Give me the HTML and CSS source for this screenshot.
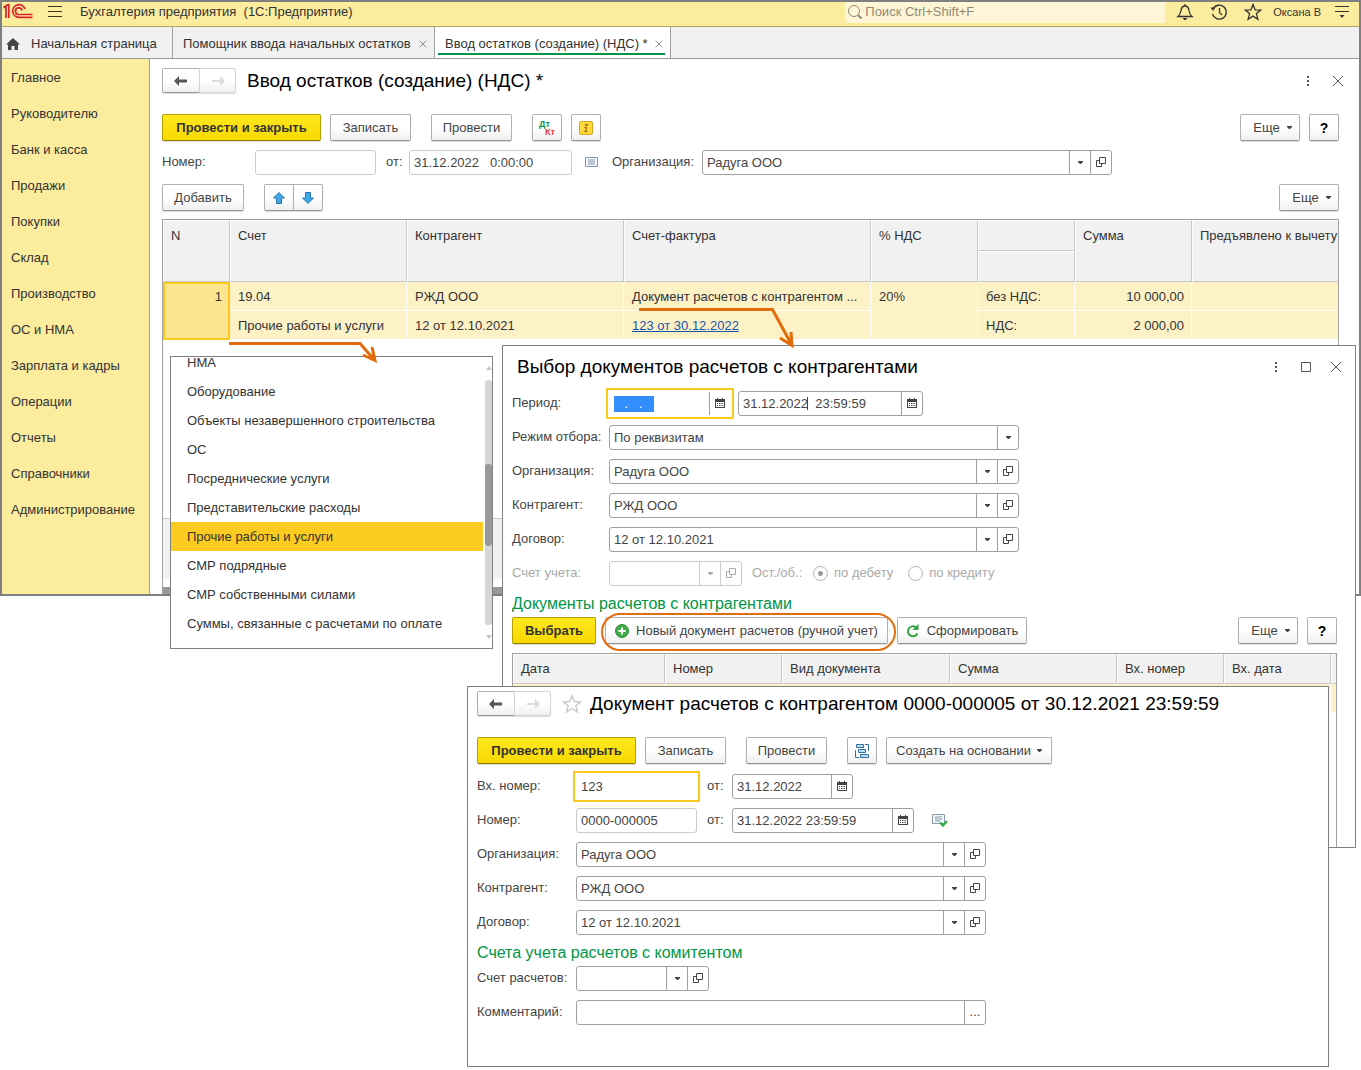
FILE: index.html
```html
<!DOCTYPE html>
<html lang="ru">
<head>
<meta charset="utf-8">
<title>Бухгалтерия предприятия</title>
<link rel="stylesheet" href="styles.css">
</head>
<body>
<svg class="sprite" aria-hidden="true">
  <symbol id="i-back" viewBox="0 0 16 12"><path d="M1 6l5-5v3.600h8v2.800H6V11z" fill="currentColor"/></symbol>
  <symbol id="i-forward" viewBox="0 0 16 12"><path d="M15 6l-5-5v4H2v2h8v4z" fill="currentColor"/></symbol>
  <symbol id="i-caret" viewBox="0 0 5 3"><path d="M0 0h5v1L3 3H2L0 1z" fill="currentColor"/></symbol>
  <symbol id="i-open" viewBox="0 0 10 10"><path d="M3.500.5h6v6h-6zM3 3.500H.5v6h5V7" fill="none" stroke="currentColor"/></symbol>
  <symbol id="i-cal" viewBox="0 0 10 10"><path d="M0 1h2V0h1v1h4V0h1v1h2v9H0zM1 4v5h8V4z" fill="currentColor" fill-rule="evenodd"/><path d="M2 5h1v1H2zM4 5h1v1H4zM5.500 5h1v1h-1zM7 5h1v1H7zM2 7h1v1H2zM4 7h1v1H4zM5.500 7h1v1h-1zM7 7h1v1H7z" fill="currentColor"/></symbol>
  <symbol id="i-close" viewBox="0 0 12 12"><path d="M1 1l10 10M11 1L1 11" stroke="currentColor" fill="none"/></symbol>
  <symbol id="i-dots" viewBox="0 0 12 12"><path d="M5 1h2v2H5zM5 5h2v2H5zM5 9h2v2H5z" fill="currentColor"/></symbol>
  <symbol id="i-star" viewBox="0 0 18 18"><path d="M9 1.500l2.100 5.300 5.700.3-4.400 3.500 1.500 5.600L9 13.100l-4.900 3.100 1.500-5.600L1.200 7.100l5.700-.3z" fill="none" stroke="currentColor" stroke-width="1.300"/></symbol>
  <symbol id="i-list" viewBox="0 0 14 12"><path d="M.5 1.500h12v9H.5z" fill="#f4f7fa" stroke="#8598ad"/><path d="M3 4h7M3 6h7M3 8h7" stroke="#8598ad"/></symbol>
</svg>

<div class="desktop">
  <main class="app">
    <header class="topbar">
      <svg class="logo" viewBox="0 2 32 20" role="img" aria-label="1С"><path d="M1.500 7.500H4V18M6.800 18V4.800H5.500L1.500 7.500M23 9A6.300 6.300 0 1 0 17 17.300H30.500M20 10.500a3.300 3.300 0 1 0-3 4H30.500" fill="none" stroke="#d9252b" stroke-width="1.700"/></svg>
      <button class="plain burger" aria-label="Меню"><svg viewBox="0 0 14 12"><path d="M0 .5h14M0 5.500h14M0 10.500h14" stroke="#3b3825"/></svg></button>
      <span class="app-name">Бухгалтерия предприятия&nbsp; (1С:Предприятие)</span>
      <label class="search">
        <svg viewBox="0 0 16 16"><circle cx="7" cy="7" r="5.500" fill="none" stroke="#8f8a78"/><path d="M11 11l3.500 3.500" stroke="#8f8a78" stroke-width="2"/></svg>
        <input type="search" placeholder="Поиск Ctrl+Shift+F" aria-label="Поиск">
      </label>
      <button class="plain" aria-label="Уведомления"><svg class="i18" viewBox="0 0 18 18"><path d="M2 13.500c2-1.500 2.500-3 3-6C5.500 4 7 3 9 3s3.500 1 4 4.500c.5 3 1 4.500 3 6zM9 3V1" fill="none" stroke="#333" stroke-width="1.300"/><path d="M6.500 15h5L9 17.500z" fill="#333"/></svg></button>
      <button class="plain" aria-label="История"><svg class="i18" viewBox="0 0 18 18"><path d="M3 6a7 7 0 1 1-.5 5M9.500 5v4.500l2.500 2.500" fill="none" stroke="#333" stroke-width="1.300"/><path d="M.5 4.500h5L3 8z" fill="#333"/></svg></button>
      <button class="plain" aria-label="Избранное"><svg class="i18 dark"><use href="#i-star"/></svg></button>
      <span class="user">Оксана В</span>
      <button class="plain" aria-label="Настройки"><svg class="tune" viewBox="0 0 14 14"><path d="M0 1.500h14M0 6.500h14" stroke="#333" stroke-width="1.200"/><path d="M4.500 10h5L7 13z" fill="#333"/></svg></button>
    </header>

    <nav class="tabs">
      <a href="#" class="tab home"><svg viewBox="0 0 14 12"><path d="M7 0l7 6.500h-2V12H8.500V8h-3v4H2V6.500H0z" fill="#444"/></svg>Начальная страница</a>
      <a href="#" class="tab">Помощник ввода начальных остатков<svg class="tab-x"><use href="#i-close"/></svg></a>
      <a href="#" class="tab active">Ввод остатков (создание) (НДС) *<svg class="tab-x"><use href="#i-close"/></svg></a>
    </nav>

    <div class="body">
      <nav class="side">
        <a href="#">Главное</a><a href="#">Руководителю</a><a href="#">Банк и касса</a><a href="#">Продажи</a><a href="#">Покупки</a><a href="#">Склад</a><a href="#">Производство</a><a href="#">ОС и НМА</a><a href="#">Зарплата и кадры</a><a href="#">Операции</a><a href="#">Отчеты</a><a href="#">Справочники</a><a href="#">Администрирование</a>
      </nav>

      <section class="page">
        <div class="heading">
          <div class="pair nav-pair"><button class="btn" aria-label="Назад"><svg class="arrow"><use href="#i-back"/></svg></button><button class="btn off" aria-label="Вперед"><svg class="arrow"><use href="#i-forward"/></svg></button></div>
          <h1>Ввод остатков (создание) (НДС) *</h1>
          <div class="win-ctl"><button class="plain" aria-label="Еще"><svg class="i12"><use href="#i-dots"/></svg></button><button class="plain" aria-label="Закрыть"><svg class="i12"><use href="#i-close"/></svg></button></div>
        </div>
        <div class="bar">
          <button class="btn main w-post">Провести и закрыть</button>
          <button class="btn w-save">Записать</button>
          <button class="btn w-save gap">Провести</button>
          <button class="btn sq gap dtkt"><span class="dt">Дт</span><span class="kt">Кт</span></button>
          <button class="btn sq" aria-label="Информация"><svg class="i14" viewBox="0 0 14 14"><rect x=".5" y=".5" width="13" height="13" rx="1.500" fill="#ffda3d" stroke="#d9a520"/><path d="M6 3h3v2H6zM5 6h3.500l-1 4H9v1H4.500l.3-1H6l.6-3H5z" fill="#a9801a"/></svg></button>
          <button class="btn w-more push">Еще<svg class="caret"><use href="#i-caret"/></svg></button>
          <button class="btn sq help">?</button>
        </div>
        <div class="row">
          <label class="lbl-num" for="num">Номер:</label>
          <div class="field ro w121"><input id="num" readonly></div>
          <label class="of" for="date">от:</label>
          <div class="field ro w163"><input id="date" value="31.12.2022   0:00:00" readonly></div>
          <svg class="list-ico"><use href="#i-list"/></svg>
          <label class="lbl-org" for="org">Организация:</label>
          <div class="field w410"><input id="org" value="Радуга ООО"><button aria-label="Выбрать"><svg class="caret"><use href="#i-caret"/></svg></button><button aria-label="Открыть"><svg class="i10"><use href="#i-open"/></svg></button></div>
        </div>
        <div class="bar bar-rows">
          <button class="btn w-add">Добавить</button>
          <div class="pair gap"><button class="btn" aria-label="Вверх"><svg class="i12" viewBox="0 0 12 12"><path d="M6 .5L11.500 6H8.500v5.500h-5V6H.5z" fill="#3fa9ea" stroke="#2a74ad"/></svg></button><button class="btn" aria-label="Вниз"><svg class="i12" viewBox="0 0 12 12"><path d="M6 11.500L.5 6h3V.5h5V6h3z" fill="#3fa9ea" stroke="#2a74ad"/></svg></button></div>
          <button class="btn w-more push">Еще<svg class="caret"><use href="#i-caret"/></svg></button>
        </div>
        <div class="grid-box">
          <table class="grid">
            <colgroup><col class="c67"><col class="c177"><col class="c217"><col class="c247"><col class="c107"><col class="c97"><col class="c117"><col></colgroup>
            <thead>
              <tr><th rowspan="2">N</th><th rowspan="2">Счет</th><th rowspan="2">Контрагент</th><th rowspan="2">Счет-фактура</th><th rowspan="2">% НДС</th><th></th><th rowspan="2">Сумма</th><th rowspan="2">Предъявлено к вычету</th></tr>
              <tr><th class="mid"></th></tr>
            </thead>
            <tbody>
              <tr><td rowspan="2" class="num current">1</td><td>19.04</td><td>РЖД ООО</td><td>Документ расчетов с контрагентом ...</td><td rowspan="2">20%</td><td>без НДС:</td><td class="num">10 000,00</td><td></td></tr>
              <tr><td>Прочие работы и услуги</td><td>12 от 12.10.2021</td><td><a href="#">123 от 30.12.2022</a></td><td>НДС:</td><td class="num">2 000,00</td><td></td></tr>
            </tbody>
          </table>
          <div class="grid-foot"></div>
          <div class="grid-scroll"></div>
        </div>
      </section>
    </div>
  </main>

  <div class="popup">
    <ul>
      <li>НМА</li><li>Оборудование</li><li>Объекты незавершенного строительства</li><li>ОС</li><li>Посреднические услуги</li><li>Представительские расходы</li><li class="sel">Прочие работы и услуги</li><li>СМР подрядные</li><li>СМР собственными силами</li><li>Суммы, связанные с расчетами по оплате</li><li>Т</li>
    </ul>
    <div class="scroll"><i class="up"></i><div class="track"><div class="thumb"></div></div><i class="down"></i></div>
  </div>

  <section class="win choose">
    <div class="heading">
      <h2>Выбор документов расчетов с контрагентами</h2>
      <div class="win-ctl"><button class="plain" aria-label="Еще"><svg class="i12"><use href="#i-dots"/></svg></button><button class="plain" aria-label="Развернуть"><svg class="i12" viewBox="0 0 12 12"><path d="M1.500 1.500h9v9h-9z" fill="none" stroke="currentColor"/></svg></button><button class="plain" aria-label="Закрыть"><svg class="i12"><use href="#i-close"/></svg></button></div>
    </div>
    <div class="form">
      <div class="row"><label for="p1">Период:</label>
        <div class="field focus w122"><input id="p1" class="picked" value="  .   .    "><button class="push" aria-label="Календарь"><svg class="i10"><use href="#i-cal"/></svg></button></div>
        <div class="field w185"><input value="31.12.2022  23:59:59" aria-label="Конец периода"><span class="beam"></span><button aria-label="Календарь"><svg class="i10"><use href="#i-cal"/></svg></button></div></div>
      <div class="row"><label for="mode">Режим отбора:</label>
        <div class="field w410"><select id="mode"><option>По реквизитам</option></select><span class="drop"><svg class="caret"><use href="#i-caret"/></svg></span></div></div>
      <div class="row"><label for="o2">Организация:</label>
        <div class="field w410"><input id="o2" value="Радуга ООО"><button aria-label="Выбрать"><svg class="caret"><use href="#i-caret"/></svg></button><button aria-label="Открыть"><svg class="i10"><use href="#i-open"/></svg></button></div></div>
      <div class="row"><label for="k2">Контрагент:</label>
        <div class="field w410"><input id="k2" value="РЖД ООО"><button aria-label="Выбрать"><svg class="caret"><use href="#i-caret"/></svg></button><button aria-label="Открыть"><svg class="i10"><use href="#i-open"/></svg></button></div></div>
      <div class="row"><label for="d2">Договор:</label>
        <div class="field w410"><input id="d2" value="12 от 12.10.2021"><button aria-label="Выбрать"><svg class="caret"><use href="#i-caret"/></svg></button><button aria-label="Открыть"><svg class="i10"><use href="#i-open"/></svg></button></div></div>
      <div class="row disabled"><label for="s2">Счет учета:</label>
        <div class="field w133"><input id="s2" disabled><button disabled aria-label="Выбрать"><svg class="caret"><use href="#i-caret"/></svg></button><button disabled aria-label="Открыть"><svg class="i10"><use href="#i-open"/></svg></button></div>
        <span class="bal">Ост./об.:</span>
        <label class="radio"><input type="radio" name="side" checked disabled>по дебету</label>
        <label class="radio"><input type="radio" name="side" disabled>по кредиту</label></div>
    </div>
    <h3>Документы расчетов с контрагентами</h3>
    <div class="bar">
      <button class="btn main w-pick">Выбрать</button>
      <div class="ringed"><button class="btn w-new"><svg class="i14" viewBox="0 0 14 14"><circle cx="7" cy="7" r="6.500" fill="#3fae49" stroke="#2b8a3a"/><path d="M7 3.500v7M3.500 7h7" stroke="#fff" stroke-width="2"/></svg>Новый документ расчетов (ручной учет)</button></div>
      <button class="btn w-build"><svg class="i14" viewBox="0 0 14 14"><path d="M11.500 9.500A5 5 0 1 1 10 3.300" fill="none" stroke="#2fa33f" stroke-width="2"/><path d="M12.500 0v6h-6z" fill="#2fa33f"/></svg>Сформировать</button>
      <button class="btn w-more push">Еще<svg class="caret"><use href="#i-caret"/></svg></button>
      <button class="btn sq help">?</button>
    </div>
    <div class="grid-box docs">
      <table class="grid">
        <colgroup><col class="c152"><col class="c117"><col class="c168"><col class="c167"><col class="c107"><col class="c107"><col></colgroup>
        <thead><tr><th>Дата</th><th>Номер</th><th>Вид документа</th><th>Сумма</th><th>Вх. номер</th><th>Вх. дата</th><th></th></tr></thead>
        <tbody><tr><td></td><td></td><td></td><td></td><td></td><td></td><td></td></tr></tbody>
      </table>
    </div>
  </section>

  <section class="win doc">
    <div class="heading">
      <div class="pair nav-pair"><button class="btn" aria-label="Назад"><svg class="arrow"><use href="#i-back"/></svg></button><button class="btn off" aria-label="Вперед"><svg class="arrow"><use href="#i-forward"/></svg></button></div>
      <button class="plain fav" aria-label="В избранное"><svg class="i20"><use href="#i-star"/></svg></button>
      <h2>Документ расчетов с контрагентом 0000-000005 от 30.12.2021 23:59:59</h2>
    </div>
    <div class="bar">
      <button class="btn main w-post">Провести и закрыть</button>
      <button class="btn w-save">Записать</button>
      <button class="btn w-save gap">Провести</button>
      <button class="btn sq gap" aria-label="Структура"><svg class="i14" viewBox="0 0 14 14"><path d="M1.500.5h7v3h-7zM3.500 5.500h7v3h-7zM5.500 10.500h8v3h-8z" fill="#b9dcf2" stroke="#336f9f"/><path d="M10 .5h3.500V7M.5 6v7.500H4" fill="none" stroke="#336f9f"/></svg></button>
      <button class="btn w-base">Создать на основании<svg class="caret"><use href="#i-caret"/></svg></button>
    </div>
    <div class="form">
      <div class="row"><label for="in3">Вх. номер:</label>
        <div class="field focus w121"><input id="in3" value="123"></div><label class="of" for="ind3">от:</label>
        <div class="field w121"><input id="ind3" value="31.12.2022"><button aria-label="Календарь"><svg class="i10"><use href="#i-cal"/></svg></button></div></div>
      <div class="row"><label for="n3">Номер:</label>
        <div class="field ro w121"><input id="n3" value="0000-000005" readonly></div><label class="of" for="nd3">от:</label>
        <div class="field w182"><input id="nd3" value="31.12.2022 23:59:59"><button aria-label="Календарь"><svg class="i10"><use href="#i-cal"/></svg></button></div>
        <svg class="posted" viewBox="0 0 16 14"><path d="M.5 1.500h12v9H.5z" fill="#f4f7fa" stroke="#8598ad"/><path d="M3 4h7M3 6h7M3 8h5" stroke="#8598ad"/><path d="M8 9.500l3 3L15 8" fill="none" stroke="#35b04a" stroke-width="2.400"/></svg></div>
      <div class="row"><label for="o3">Организация:</label>
        <div class="field w410"><input id="o3" value="Радуга ООО"><button aria-label="Выбрать"><svg class="caret"><use href="#i-caret"/></svg></button><button aria-label="Открыть"><svg class="i10"><use href="#i-open"/></svg></button></div></div>
      <div class="row"><label for="k3">Контрагент:</label>
        <div class="field w410"><input id="k3" value="РЖД ООО"><button aria-label="Выбрать"><svg class="caret"><use href="#i-caret"/></svg></button><button aria-label="Открыть"><svg class="i10"><use href="#i-open"/></svg></button></div></div>
      <div class="row"><label for="d3">Договор:</label>
        <div class="field w410"><input id="d3" value="12 от 12.10.2021"><button aria-label="Выбрать"><svg class="caret"><use href="#i-caret"/></svg></button><button aria-label="Открыть"><svg class="i10"><use href="#i-open"/></svg></button></div></div>
    </div>
    <h3>Счета учета расчетов с комитентом</h3>
    <div class="form">
      <div class="row"><label for="s3">Счет расчетов:</label>
        <div class="field w133"><input id="s3"><button aria-label="Выбрать"><svg class="caret"><use href="#i-caret"/></svg></button><button aria-label="Открыть"><svg class="i10"><use href="#i-open"/></svg></button></div></div>
      <div class="row"><label for="c3">Комментарий:</label>
        <div class="field w410"><input id="c3"><button aria-label="Изменить">...</button></div></div>
    </div>
  </section>

  <svg class="pointers" viewBox="0 0 600 80" aria-hidden="true"><g fill="none" stroke="#e36c0a" stroke-width="3"><path d="M9 43.500h131l14 16M152 47l3 13.500L143 55"/><path d="M419 9.500h133.500l19 35M571 32l1 13.500L560 38"/></g></svg>
</div>
</body>
</html>
```
FILE: styles.css
```css
* { box-sizing: border-box; }
body { margin: 0; background: #fff; color: #333; font: 13px/16px "Liberation Sans", Arial, sans-serif; }
button, input, select { font: inherit; color: inherit; margin: 0; }
a { color: inherit; text-decoration: none; }
svg { display: block; flex: none; }
h1, h2, h3 { margin: 0; font-weight: 400; white-space: nowrap; }
h1, h2 { color: #000; font-size: 19px; line-height: 24px; }
h3 { color: #009646; font-size: 16px; line-height: 20px; }
.sprite { position: absolute; width: 0; height: 0; }
.desktop { position: relative; min-height: 100vh; }

/* icons */
.i10 { width: 10px; height: 10px; }
.i12 { width: 12px; height: 12px; }
.i14 { width: 14px; height: 14px; }
.i18 { width: 18px; height: 18px; }
.i20 { width: 20px; height: 20px; }
.dark { color: #333; }
.arrow { width: 16px; height: 12px; }
.caret { width: 5px; height: 3px; }
.plain { display: flex; align-items: center; justify-content: center; padding: 0; border: 0; background: none; color: #555; }

/* application frame */
.app { display: flex; flex-direction: column; min-height: 596px; border: 2px solid #808080; background: #fff; }
.topbar { display: flex; align-items: center; height: 25px; padding-right: 10px; padding-bottom: 4px; border-bottom: 1px solid #b3a667; background: #fbec9e; }
.logo { width: 32px; height: 20px; }
.burger { margin: 0 18px 0 14px; }
.burger svg { width: 14px; height: 12px; }
.app-name { white-space: nowrap; }
.search { display: flex; align-items: center; gap: 2px; flex: 0 0 320px; height: 21px; margin-left: auto; margin-right: 11px; padding-left: 2px; border-radius: 0 0 2px 2px; background: #fef6d6; }
.search svg { width: 16px; height: 16px; }
.search input { flex: 1; min-width: 0; padding: 0; border: 0; background: none; outline: 0; }
.search input::placeholder { color: #8f8a78; opacity: 1; }
.search ~ .plain { margin-right: 16px; }
.user { margin: 0 14px 0 -5px; font-size: 11px; white-space: nowrap; }
.search ~ .user ~ .plain { margin-right: 0; }
.tune { width: 14px; height: 14px; }

.tabs { display: flex; height: 32px; border-bottom: 1px solid #999; background: #f1f1f1; }
.tab { display: flex; align-items: center; justify-content: space-between; width: 262px; padding: 2px 7px 0 10px; border-right: 1px solid #a0a0a0; white-space: nowrap; }
.tab.home { width: 171px; justify-content: flex-start; gap: 11px; padding-left: 4px; }
.home svg { width: 14px; height: 12px; }
.tab-x { width: 8px; height: 8px; color: #555; }
.tab.active { width: 236px; background: linear-gradient(#009646, #009646) 3px 26px / 227px 2px no-repeat #fff; }

.body { display: flex; flex: 1; }
.side { flex: 0 0 148px; padding: 1px 0 0 9px; border-right: 1px solid #b3a667; background: #fbec9e; }
.side a { display: block; line-height: 36px; }
.page { display: flex; flex-direction: column; flex: 1; min-width: 0; padding: 9px 20px 0 12px; }

.heading { display: flex; align-items: center; }
.page .heading { height: 25px; }
.page .heading h1 { margin-left: 11px; }
.win-ctl { display: flex; gap: 18px; margin-left: auto; margin-right: -5px; }
.pair { display: flex; }
.pair .btn { width: 30px; padding: 0; }
.pair .btn:first-child { border-radius: 2px 0 0 2px; }
.pair .btn:last-child { margin-left: -1px; border-radius: 0 2px 2px 0; }
.nav-pair .btn { width: 37px; height: 25px; color: #555; }
.nav-pair .btn:first-child { width: 38px; }
.nav-pair .btn.off { color: #ddd; border-color: #d4d4d4; }

/* buttons */
.bar { display: flex; align-items: center; gap: 9px; }
.page .bar { margin-top: 21px; }
.page .bar-rows { margin-top: 9px; margin-bottom: 8px; }
.btn { display: flex; align-items: center; justify-content: center; height: 27px; padding: 0; border: 1px solid #b0b0b0; border-bottom-color: #969696; border-radius: 2px; background: linear-gradient(#fff, #fff 50%, #f0f0f0); box-shadow: 0 1px 1px #ddd; color: #444; white-space: nowrap; }
.btn.main { border-color: #b5a000; border-bottom-color: #8f7d00; background: linear-gradient(#ffe81f, #f8d900); color: #333; font-weight: 700; }
.gap { margin-left: 11px; }
.push { margin-left: auto; }
.sq { width: 30px; }
.help { color: #000; font-size: 14px; font-weight: 700; }
.w-post { width: 159px; }
.w-save { width: 81px; }
.w-add { width: 82px; }
.w-more { width: 60px; gap: 7px; padding-left: 5px; }
.w-pick { width: 84px; }
.w-new { width: 283px; gap: 7px; }
.w-build { width: 130px; gap: 7px; }
.w-base { width: 166px; gap: 6px; }
.dtkt { display: grid; justify-content: stretch; align-content: center; padding: 0 6px; font-size: 9px; font-weight: 700; line-height: 8px; }
.dt { color: #009646; text-align: left; }
.kt { color: #e04040; text-align: right; }

/* fields */
.row { display: flex; align-items: center; height: 26px; }
.page .row { margin-top: 8px; }
.row label { white-space: nowrap; color: #444; }
.lbl-num { width: 93px; }
.lbl-org { width: 90px; }
.row .of { width: 33px; padding-left: 10px; }
.page .list-ico { width: 14px; height: 12px; margin: 0 13px; }
.field { position: relative; display: flex; height: 25px; border: 1px solid #a0a0a0; border-radius: 3px; background: #fff; color: #444; }
.field input, .field select { flex: 1; min-width: 0; padding: 1px 4px 0; border: 0; background: none; outline: 0; appearance: none; white-space: pre; }
.field button, .drop { display: flex; align-items: center; justify-content: center; width: 21px; padding: 0; border: 0; border-left: 1px solid #a0a0a0; background: none; }
.drop { position: absolute; top: 0; right: 0; height: 100%; pointer-events: none; }
.field.ro { border-color: #ccc; }
.field.focus { outline: 2px solid #fbc91d; outline-offset: 1px; border-color: transparent; border-radius: 0; }
.w121 { width: 121px; }
.w122 { width: 122px; }
.w133 { width: 133px; }
.w163 { width: 163px; }
.w182 { width: 182px; }
.w185 { width: 185px; }
.w410 { width: 410px; }
.field .picked { flex: 0 0 40px; height: 16px; margin: 4px 0 0 4px; padding: 0 3px; background: #338fff; color: #fff; }
.beam { position: absolute; left: 68px; top: 5px; width: 1px; height: 13px; background: #444; }
.form { display: flex; flex-direction: column; gap: 8px; }
.form .row > label:first-child { width: 97px; }
.disabled { color: #aaa; }
.disabled label, .disabled .field { color: #aaa; }
.disabled .field, .disabled .field button { border-color: #ccc; }
.bal { width: 61px; margin-left: 10px; }
.radio { display: flex; align-items: center; gap: 6px; margin-right: 15px; }
.radio input { width: 15px; height: 15px; margin: 0; border: 1px solid #b5b5b5; border-radius: 50%; appearance: none; background: #fff; }
.radio input:checked { background: radial-gradient(#999 0 2px, #fff 3px); }

/* tables */
.grid-box { display: flex; flex-direction: column; flex: 1; overflow: hidden; border: 1px solid #a0a0a0; border-bottom: 0; }
.grid { width: 100%; table-layout: fixed; border-collapse: separate; border-spacing: 0; }
.grid th, .grid td { padding: 7px 8px 5px; overflow: hidden; text-align: left; vertical-align: top; white-space: nowrap; font-weight: 400; }
.grid th { height: 31px; padding: 7px; border: 1px solid #fff; border-right-color: #c8c8c8; border-bottom-color: #c8c8c8; background: #f1f1f1; }
.grid td { height: 29px; border-right: 1px solid #fff; border-bottom: 1px solid #fff; background: #fdf1c6; }
.grid th:last-child, .grid td:last-child { border-right: 0; }
.grid th.mid { border-right: 1px solid #c8c8c8; }
.grid td.num { text-align: right; padding-right: 7px; }
.grid td.current { padding: 5px 6px; border: 2px solid #fbc91d; background: #fbe58f; }
.grid a { color: #1a53ad; text-decoration: underline; }
.grid-foot { height: 61px; margin-top: auto; border-top: 1px solid #c8c8c8; background: #f1f1f1; }
.grid-scroll { height: 7px; margin-top: 8px; background: #999; }
.c67 { width: 67px; }
.c97 { width: 97px; }
.c107 { width: 107px; }
.c117 { width: 117px; }
.c152 { width: 152px; }
.c167 { width: 167px; }
.c168 { width: 168px; }
.c177 { width: 177px; }
.c217 { width: 217px; }
.c247 { width: 247px; }

/* account list */
.popup { position: absolute; left: 170px; top: 356px; display: flex; width: 323px; height: 293px; border: 1px solid #808080; background: #fff; overflow: hidden; }
.popup ul { flex: 1; height: 319px; margin: -9px 2px 0 0; padding: 0; list-style: none; }
.popup li { height: 29px; padding-left: 16px; line-height: 29px; white-space: nowrap; }
.popup .sel { background: #fbcb20; }
.scroll { display: flex; flex-direction: column; align-items: center; gap: 10px; width: 7px; padding: 9px 0; }
.scroll i { border: 3px solid transparent; border-top: 0; border-bottom: 4px solid #c4c4c4; }
.scroll .down { border-top: 4px solid #c4c4c4; border-bottom: 0; }
.track { flex: 1; width: 7px; padding-top: 84px; border-radius: 3px; background: #d6d6d6; }
.thumb { height: 82px; border-radius: 3px; background: #999; }

/* floating windows */
.win { position: absolute; display: flex; flex-direction: column; border: 1px solid #808080; background: #fff; }
.choose { left: 502px; right: 5px; top: 345px; height: 503px; padding: 9px 18px 0 9px; }
.choose .heading { height: 24px; margin-bottom: 11px; padding-left: 5px; }
.choose .form .focus { margin-right: 7px; }
.choose h3 { margin: 8px 0 3px; }
.docs { margin-top: 9px; }
.docs .grid th { height: 30px; padding: 6px 7px; }
.ringed { position: relative; }
.ringed::after { content: ""; position: absolute; inset: -4px -8px -7px -4px; border: 2px solid #e36c0a; border-radius: 19px; pointer-events: none; }
.doc { left: 467px; right: 32px; top: 686px; height: 381px; padding: 4px 9px 0; }
.doc .heading { height: 25px; margin-bottom: 21px; }
.fav { margin: 0 8px 0 11px; color: #ccc; }
.doc .bar { margin-bottom: 9px; }
.doc .form .row > label:first-child { width: 99px; }
.doc .row .of { width: 35px; }
.doc h3 { margin: 8px 0 2px; }
.posted { width: 16px; height: 14px; margin-left: 18px; }
.pointers { position: absolute; left: 220px; top: 300px; width: 600px; height: 80px; pointer-events: none; }
```
